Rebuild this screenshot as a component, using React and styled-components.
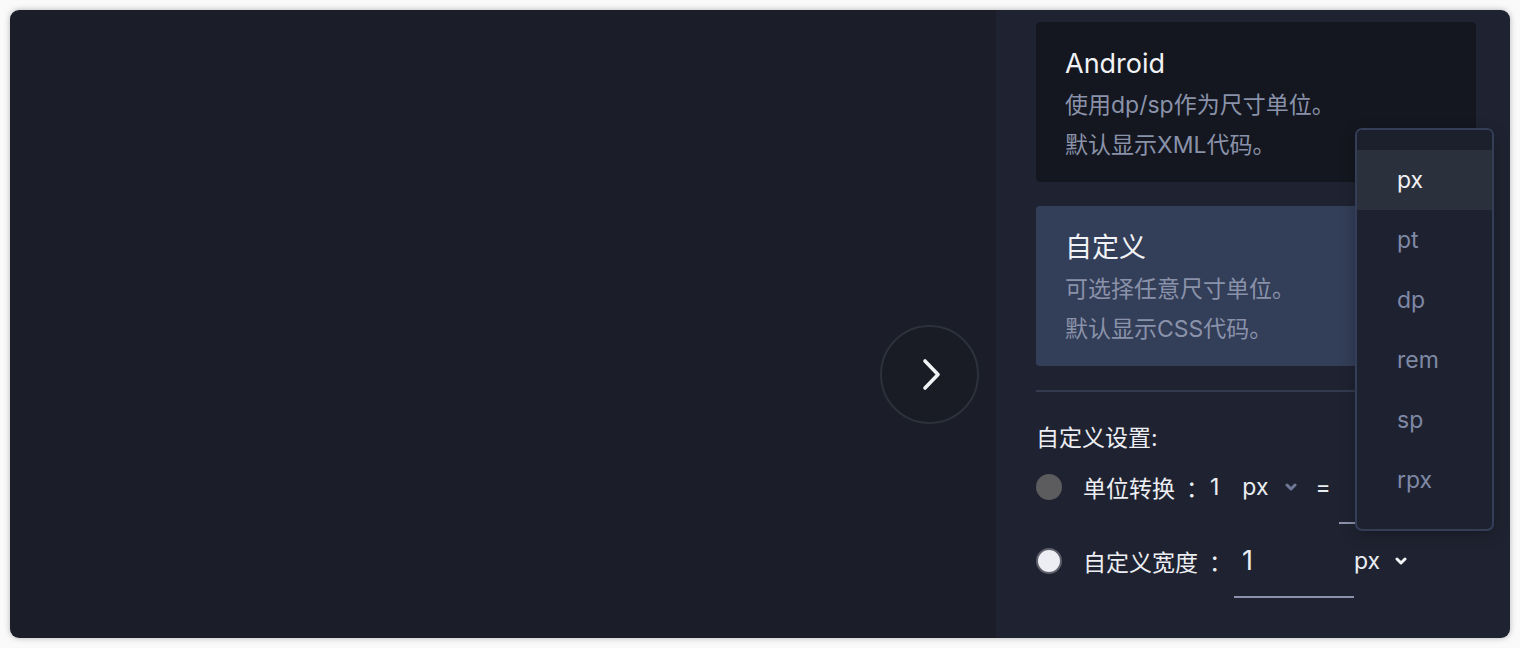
import React from 'react';
import styled, { createGlobalStyle } from 'styled-components';

const GlobalStyle = createGlobalStyle`
    html, body {
        margin: 0;
        padding: 0;
        background: #fafafa;
    }
    * {
        box-sizing: border-box;
    }
    body {
        font-family: 'Inter', 'Noto Sans CJK SC', sans-serif;
    }
`;

const unitOptions = ['px', 'pt', 'dp', 'rem', 'sp', 'rpx'];

const modes = [
    { id: 'android', title: 'Android', lines: ['使用dp/sp作为尺寸单位。', '默认显示XML代码。'], active: false },
    { id: 'custom', title: '自定义', lines: ['可选择任意尺寸单位。', '默认显示CSS代码。'], active: true },
];

function ChevronDown({ color }) {
    return (
        <svg width="12" height="8" viewBox="0 0 12 8">
            <polyline points="2,2 6,6 10,2" fill="none" stroke={color} strokeWidth="3" strokeLinecap="round" strokeLinejoin="round" />
        </svg>
    );
}

function App() {
    return (
        <Page>
            <GlobalStyle />
            <Window>
                <LeftPane>
                    <NextButton aria-label="next">
                        <svg width="20" height="33" viewBox="0 0 20 33">
                            <polyline points="3,3 16,16.5 3,30" fill="none" stroke="#f2f3f5" strokeWidth="3.6" strokeLinecap="round" strokeLinejoin="round" />
                        </svg>
                    </NextButton>
                </LeftPane>

                <RightPane>
                    {modes.map(item => (
                        <ModeCard key={item.id} $active={item.active}>
                            <CardTitle>{item.title}</CardTitle>
                            {item.lines.map(line => (
                                <CardLine key={line}>{line}</CardLine>
                            ))}
                        </ModeCard>
                    ))}

                    <Divider />

                    <SettingsTitle>自定义设置:</SettingsTitle>

                    <OptionRow>
                        <Radio $checked={false} />
                        <OptionLabel>单位转换<Colon>：</Colon></OptionLabel>
                        <Value>1</Value>
                        <UnitSelect $lead="23px" $gap="17px">
                            px
                            <ChevronDown color="#6f7896" />
                        </UnitSelect>
                        <Equals>=</Equals>
                        <LineInput $offset="8px" />
                    </OptionRow>

                    <OptionRow>
                        <Radio $checked />
                        <OptionLabel>自定义宽度<Colon>：</Colon></OptionLabel>
                        <LineInput $offset="2px" $big>1</LineInput>
                        <UnitSelect $gap="15px">
                            px
                            <ChevronDown color="#f2f3f5" />
                        </UnitSelect>
                    </OptionRow>

                    <Dropdown>
                        <DropdownHead />
                        {unitOptions.map((unit, i) => (
                            <DropdownItem key={unit} $selected={i === 0}>{unit}</DropdownItem>
                        ))}
                    </Dropdown>
                </RightPane>
            </Window>
        </Page>
    );
}

const Page = styled.div`
    padding: 10px;
    height: 648px;
`;

const Window = styled.div`
    display: flex;
    height: 628px;
    border-radius: 9px;
    overflow: hidden;
    box-shadow: 0 0 6px rgba(0, 0, 0, 0.28);
`;

const LeftPane = styled.div`
    flex: 1;
    background: #1b1e29;
    display: flex;
    align-items: center;
    justify-content: flex-end;
    padding: 100px 17px 0 0;
`;

const NextButton = styled.button`
    width: 99px;
    height: 99px;
    border-radius: 50%;
    border: 2px solid #2d313b;
    background: #191c25;
    display: flex;
    align-items: center;
    justify-content: center;
    padding: 0 0 0 5px;
    cursor: pointer;
`;

const RightPane = styled.div`
    position: relative;
    width: 514px;
    background: #1f2331;
    padding: 12px 34px 0 40px;
    color: #eceef3;
`;

const ModeCard = styled.div`
    height: 160px;
    border-radius: 4px;
    padding: 24px 29px 0;
    margin-bottom: 24px;
    background: ${p => (p.$active ? '#333e58' : '#14171f')};
`;

const CardTitle = styled.div`
    font-size: 27px;
    line-height: 36px;
    color: #f1f2f5;
    margin-bottom: 3px;
`;

const CardLine = styled.div`
    font-size: 23px;
    line-height: 40px;
    color: #8a92aa;
`;

const Divider = styled.div`
    height: 2px;
    background: #343b4f;
`;

const SettingsTitle = styled.div`
    margin-top: 31px;
    margin-bottom: -5px;
    font-size: 23px;
    line-height: 30px;
    color: #eceef3;
`;

const OptionRow = styled.div`
    display: flex;
    align-items: center;
    height: 70px;
    margin-top: 4px;
    font-size: 23px;
`;

const Radio = styled.span`
    width: 26px;
    height: 26px;
    border-radius: 50%;
    flex-shrink: 0;
    background: ${p => (p.$checked ? '#eceef3' : '#5c5c5e')};
    border: ${p => (p.$checked ? '2px solid #5e616b' : 'none')};
`;

const OptionLabel = styled.span`
    margin-left: 21px;
    white-space: nowrap;
`;

const Colon = styled.span`
    margin-left: 11px;
`;

const Value = styled.span`
    margin-left: 1px;
`;

const UnitSelect = styled.span`
    display: flex;
    align-items: center;
    gap: ${p => p.$gap};
    margin-left: ${p => p.$lead || '0'};
    color: #eceef3;
`;

const Equals = styled.span`
    margin-left: 18px;
`;

const LineInput = styled.div`
    width: 120px;
    height: 71px;
    margin-left: ${p => p.$offset};
    padding: 14px 8px 15px;
    line-height: 40px;
    font-size: ${p => (p.$big ? '27px' : '23px')};
    border-bottom: 2px solid #8a92ac;
    color: #eceef3;
    flex-shrink: 0;
    margin-top: 2px;
`;

const Dropdown = styled.div`
    position: absolute;
    left: 359px;
    top: 118px;
    width: 139px;
    height: 403px;
    background: #1e2230;
    border: 2px solid #343e58;
    border-radius: 7px;
    overflow: hidden;
    box-shadow: 0 4px 14px rgba(0, 0, 0, 0.25);
`;

const DropdownHead = styled.div`
    height: 20px;
    background: #1c202d;
`;

const DropdownItem = styled.div`
    height: 60px;
    line-height: 60px;
    padding-left: 40px;
    font-size: 23px;
    color: ${p => (p.$selected ? '#f1f2f5' : '#7f89a6')};
    background: ${p => (p.$selected ? '#2b303d' : 'transparent')};
`;

export default App;
